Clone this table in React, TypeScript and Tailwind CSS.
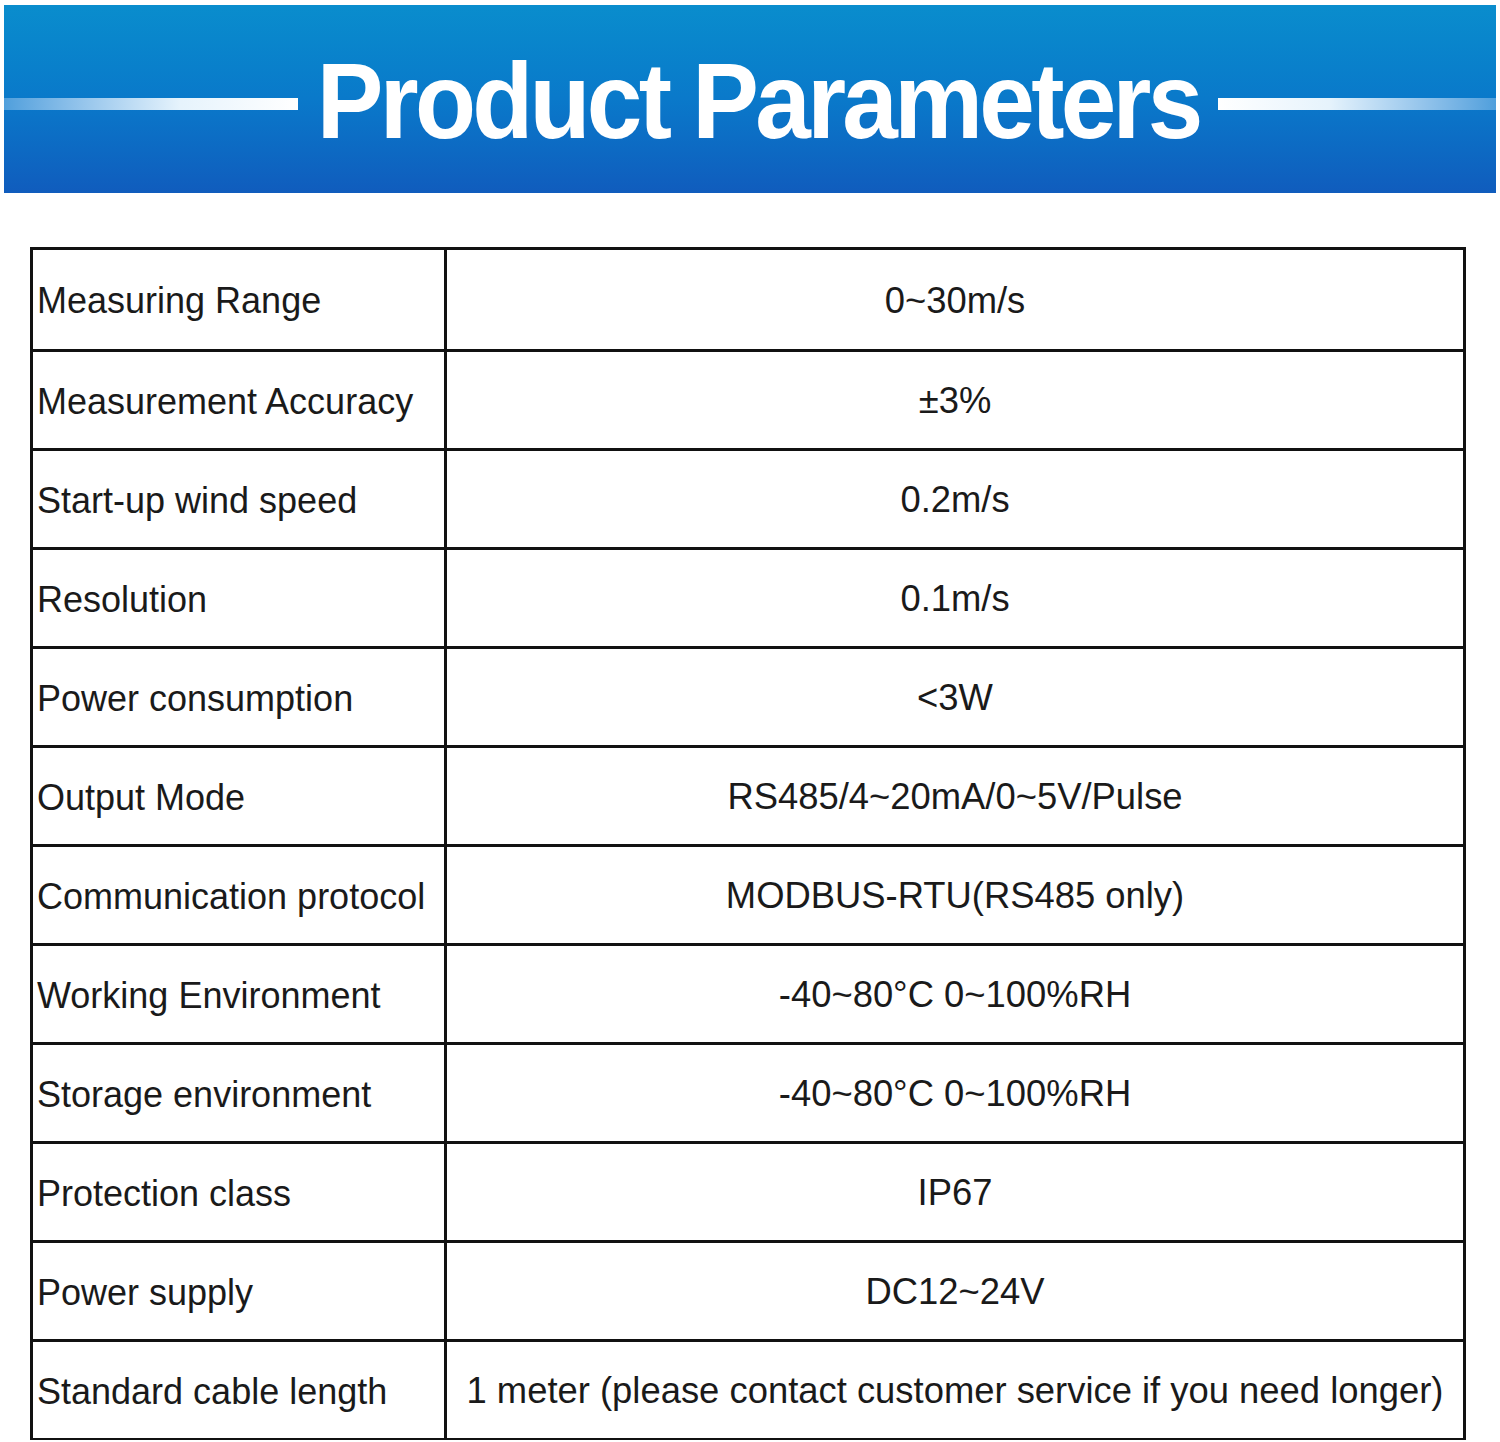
import React from "react";

const rows: [string, string][] = [
  ["Measuring Range", "0~30m/s"],
  ["Measurement Accuracy", "±3%"],
  ["Start-up wind speed", "0.2m/s"],
  ["Resolution", "0.1m/s"],
  ["Power consumption", "<3W"],
  ["Output Mode", "RS485/4~20mA/0~5V/Pulse"],
  ["Communication protocol", "MODBUS-RTU(RS485 only)"],
  ["Working Environment", "-40~80°C 0~100%RH"],
  ["Storage environment", "-40~80°C 0~100%RH"],
  ["Protection class", "IP67"],
  ["Power supply", "DC12~24V"],
  ["Standard cable length", "1 meter (please contact customer service if you need longer)"],
];

export default function App() {
  return (
    <div className="w-[1500px] h-[1442px] bg-white overflow-hidden pt-[5px]" style={{ fontFamily: "'Liberation Sans', Arial, sans-serif" }}>
      <div className="mx-[4px] h-[188px] bg-gradient-to-b from-[#0a8dcd] via-[#0a79ca] to-[#105cbd] flex items-center">
        <div className="w-[294px] h-[12px] mt-[10px] shrink-0 bg-gradient-to-r from-[#4f9fdc] via-[#e6f3fc] via-60% to-white" />
        <div className="w-[920px] shrink-0 flex justify-center mt-[4px]">
          <span className="text-white font-bold text-[108px] leading-none tracking-[-4px] whitespace-nowrap scale-x-[0.925] inline-block">
            Product Parameters
          </span>
        </div>
        <div className="flex-1 h-[12px] mt-[10px] bg-gradient-to-l from-[#4f9fdc] via-[#e6f3fc] via-60% to-white" />
      </div>
      <div className="mt-[54px] ml-[30px] w-[1436px] border-[3px] border-[#111] border-b-[2px]">
        {rows.map(([k, v], i) => (
          <div key={i} className={`flex h-[99px] ${i > 0 ? "border-t-[3px] border-[#111]" : ""}`}>
            <div className="w-[414px] shrink-0 border-r-[3px] border-[#111] flex items-center pl-[4px] pt-[3px] text-[36px] text-[#1a1a1a] whitespace-nowrap">
              {k}
            </div>
            <div className="flex-1 flex items-center justify-center pt-[3px] text-[36.4px] text-[#1a1a1a] whitespace-nowrap">
              {v}
            </div>
          </div>
        ))}
      </div>
    </div>
  );
}
